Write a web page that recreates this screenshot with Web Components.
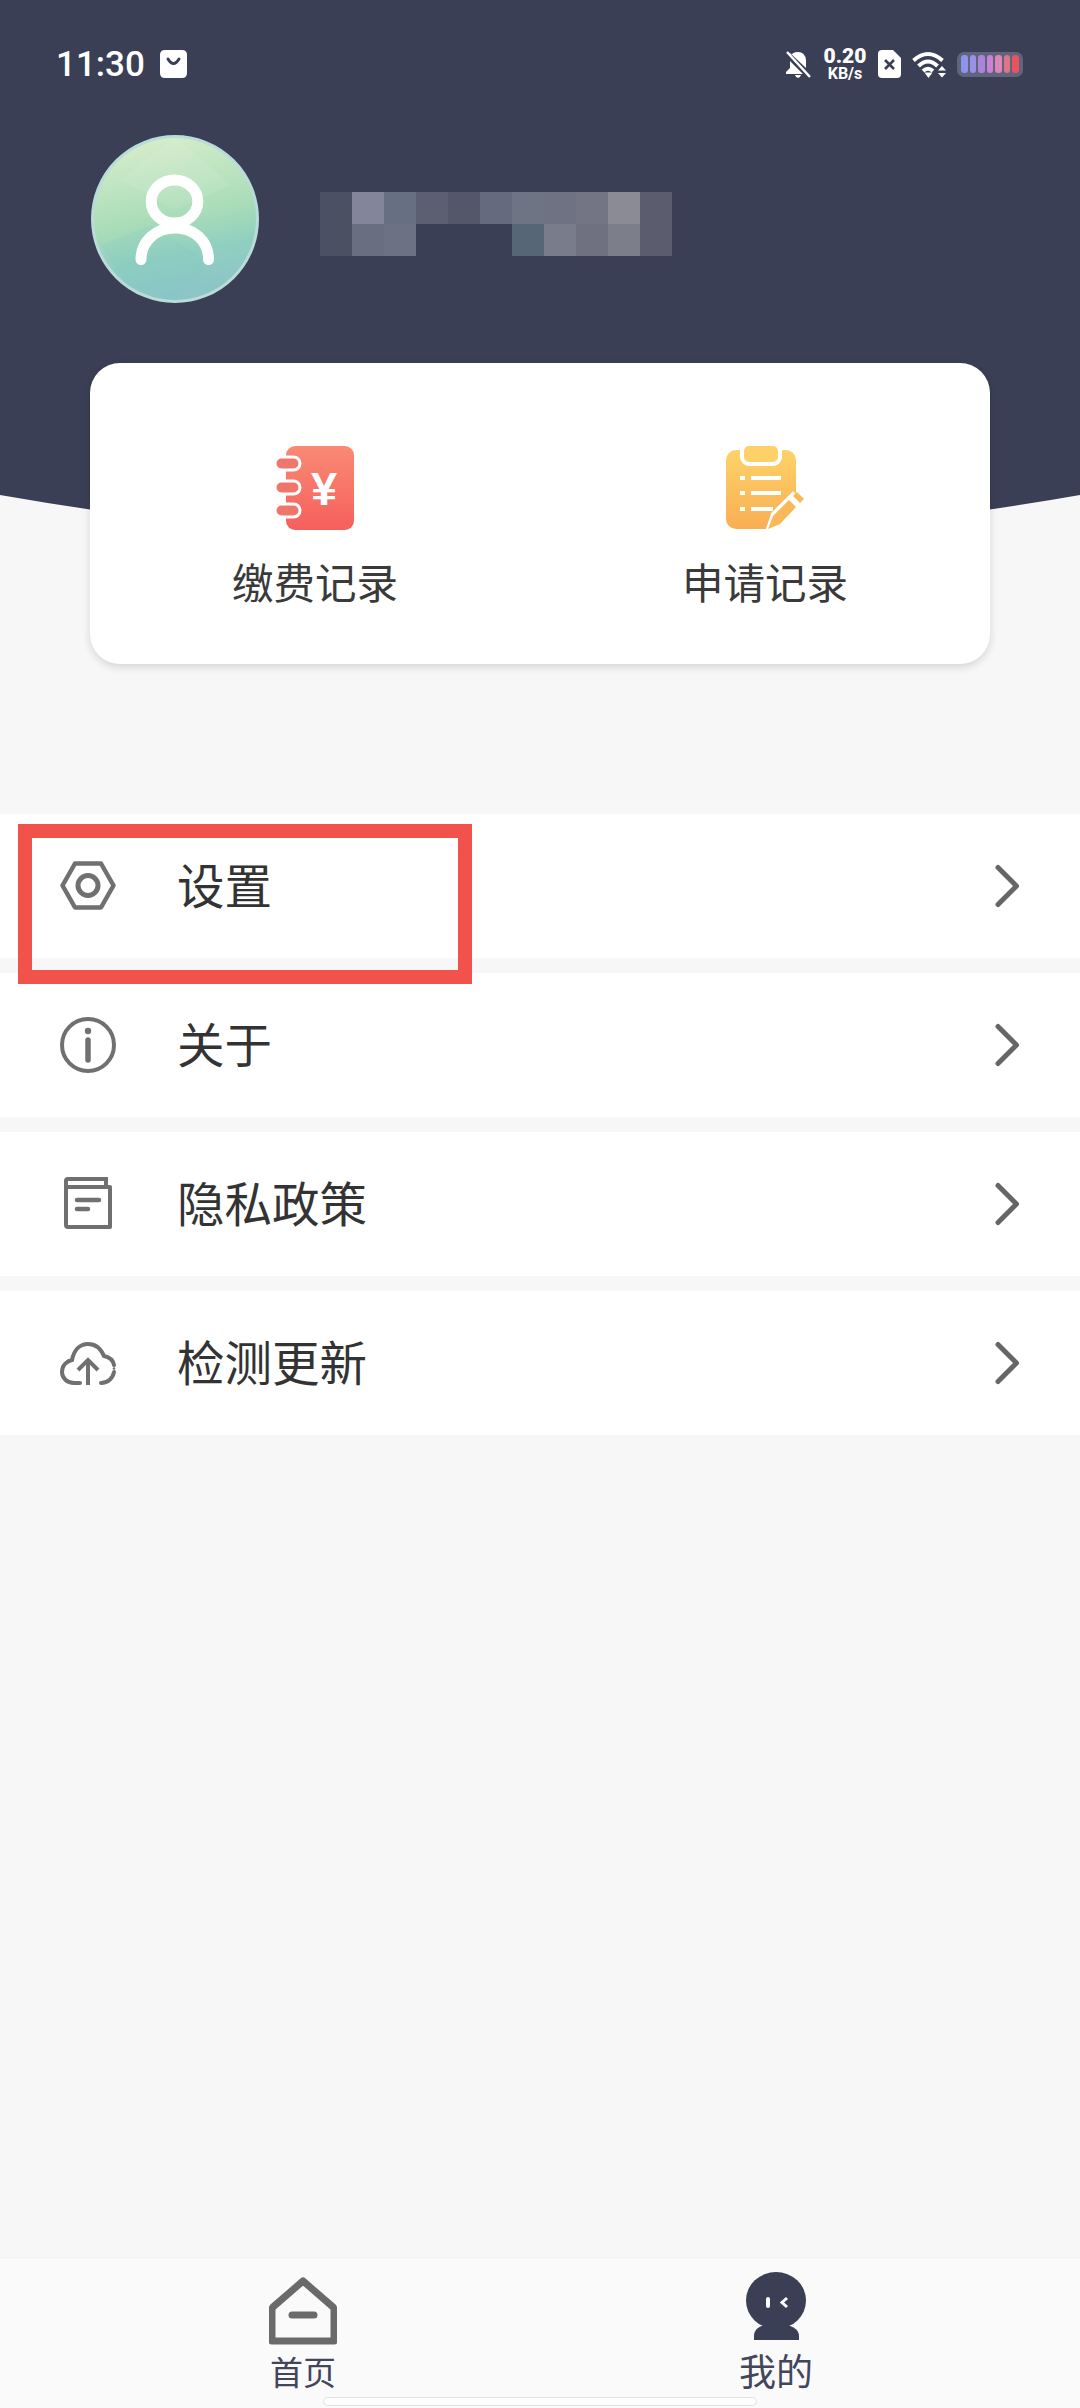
<!DOCTYPE html>
<html lang="zh">
<head>
<meta charset="utf-8">
<title>我的</title>
<style>
    html, body {
        margin: 0;
        padding: 0;
        height: 2408px;
        overflow: hidden;
    }
    body {
        display: flex;
        flex-direction: column;
        background: #f7f7f8;
        font-family: "Noto Sans CJK SC", "Noto Sans", sans-serif;
    }
    .spacer {
        flex: 1;
    }
</style>
</head>
<body>
    <profile-header>
        <record-card></record-card>
    </profile-header>
    <menu-list>
        <menu-row icon="gear">设置</menu-row>
        <menu-row icon="info">关于</menu-row>
        <menu-row icon="doc">隐私政策</menu-row>
        <menu-row icon="cloud">检测更新</menu-row>
    </menu-list>
    <div class="spacer"></div>
    <bottom-nav></bottom-nav>
    <highlight-box></highlight-box>

<script>
class StatusBar extends HTMLElement {
    connectedCallback() {
        this.attachShadow({ mode: 'open' });
        const bars = ['#8c94ec', '#9a92ea', '#ad84dc', '#c884d2', '#dd84b8', '#de7488', '#e9525f'];
        this.shadowRoot.innerHTML = `
            <style>
                :host {
                    display: flex;
                    align-items: center;
                    height: 128px;
                    padding: 0 57px 0 56px;
                    color: #fff;
                    font-family: Roboto, "Noto Sans", sans-serif;
                }
                .time {
                    font-size: 35px;
                    font-weight: 500;
                }
                .left {
                    display: flex;
                    align-items: center;
                    gap: 15px;
                    flex: 1;
                }
                .right {
                    display: flex;
                    align-items: center;
                }
                svg {
                    display: block;
                }
                .speed {
                    display: flex;
                    flex-direction: column;
                    align-items: center;
                    width: 44px;
                    margin: 0 11px 0 12px;
                    font-weight: 700;
                }
                .speed b {
                    font-size: 21px;
                    line-height: 18px;
                }
                .speed span {
                    font-size: 16px;
                    line-height: 17px;
                }
                .battery {
                    display: flex;
                    gap: 2px;
                    align-items: center;
                    justify-content: center;
                    width: 66px;
                    height: 25px;
                    margin-left: 10px;
                    border-radius: 7px;
                    background: #60647c;
                }
                .battery i {
                    display: block;
                    width: 6.5px;
                    height: 18px;
                    border-radius: 3px;
                }
            </style>
            <div class="left">
                <span class="time">11:30</span>
                <svg width="27" height="28" viewBox="0 0 27 28">
                    <path d="M5 0H22Q27 0 27 5V23Q27 28 22 28H5Q0 28 0 23V5Q0 0 5 0Z" fill="#fff"/>
                    <path d="M8 9Q13.5 18 19 9" fill="none" stroke="#3a3f55" stroke-width="3" stroke-linecap="round"/>
                </svg>
            </div>
            <div class="right">
                <svg width="25" height="27" viewBox="0 0 25 27">
                    <path d="M4 6Q6 1 12 1Q19 1 20 9V17L4 2ZM4 10L17 23H0V21L4 17ZM9 24H15Q14 27 12 27Q10 27 9 24Z" fill="#fff"/>
                    <path d="M1 1L24 26" stroke="#fff" stroke-width="2.5"/>
                </svg>
                <div class="speed"><b>0.20</b><span>KB/s</span></div>
                <svg width="23" height="28" viewBox="0 0 23 28">
                    <path d="M4 0H15L23 8V24Q23 28 19 28H4Q0 28 0 24V4Q0 0 4 0Z" fill="#fff"/>
                    <path d="M7 10L16 19M16 10L7 19" stroke="#3a3f55" stroke-width="2.6"/>
                </svg>
                <svg style="margin-left:11px" width="35" height="27" viewBox="0 0 35 27" fill="none" stroke="#fff" stroke-width="4">
                    <path d="M1.500 9.500Q16 -3.500 30.500 9.500"/>
                    <path d="M6.500 15Q16 6 25.500 15"/>
                    <path d="M11 20Q16 15.500 21 20"/>
                    <path d="M12.500 21.500L16.500 27L20.500 21.500Z" fill="#fff" stroke="none"/>
                    <path d="M26 19.500L30 15L34 19.500ZM26 22L34 22L30 26.500Z" fill="#fff" stroke="none"/>
                </svg>
                <div class="battery">${bars.map(c => `<i style="background:${c}"></i>`).join('')}</div>
            </div>
        `;
    }
}

class UserAvatar extends HTMLElement {
    connectedCallback() {
        this.attachShadow({ mode: 'open' });
        this.shadowRoot.innerHTML = `
            <style>
                :host {
                    display: block;
                    width: 168px;
                    height: 168px;
                }
                svg {
                    display: block;
                }
            </style>
            <svg width="168" height="168" viewBox="0 0 168 168">
                <defs>
                    <linearGradient id="face" x1="0.35" y1="0" x2="0.55" y2="1">
                        <stop offset="0" stop-color="#d6edca"/>
                        <stop offset="0.5" stop-color="#a9dcb8"/>
                        <stop offset="0.72" stop-color="#90cfc0"/>
                        <stop offset="1" stop-color="#8cc3c8"/>
                    </linearGradient>
                </defs>
                <circle cx="84" cy="84" r="82.500" fill="url(#face)" stroke="#b9dcd8" stroke-width="3"/>
                <path d="M84 2 L140 50 L84 75 L30 45Z" fill="#fff" opacity=".08"/>
                <path d="M10 110 L60 90 L120 128 L84 166 L35 150Z" fill="#7fc4c4" opacity=".16"/>
                <g fill="none" stroke="#fff" stroke-width="11" stroke-linecap="round">
                    <ellipse cx="83.500" cy="66.500" rx="23.300" ry="21.500"/>
                    <path d="M50 124.500C50 106 65 93 84 93C103 93 117.500 106 117.500 124.500"/>
                </g>
            </svg>
        `;
    }
}

class BlurName extends HTMLElement {
    connectedCallback() {
        this.attachShadow({ mode: 'open' });
        const cells = [
            '#4b5063', '#83859a', '#667082', '#5c5f71', '#54576a', '#656a7e', '#6e7483', '#6f7283', '#737585', '#8b8b96', '#5b5d6e',
            '#4b5063', '#696f80', '#6c7184', 'transparent', 'transparent', 'transparent', '#566676', '#797c8a', '#6f7080', '#7c7e8a', '#5b5d6e'
        ];
        this.shadowRoot.innerHTML = `
            <style>
                :host {
                    display: grid;
                    grid-template-columns: repeat(11, 32px);
                    grid-auto-rows: 32px;
                    margin-top: 10px;
                }
            </style>
            ${cells.map(c => `<div style="background:${c}"></div>`).join('')}
        `;
    }
}

class ProfileHeader extends HTMLElement {
    connectedCallback() {
        this.attachShadow({ mode: 'open' });
        this.shadowRoot.innerHTML = `
            <style>
                :host {
                    display: block;
                    position: relative;
                }
                .bg {
                    position: absolute;
                    left: 0;
                    top: 0;
                    display: block;
                }
                .content {
                    position: relative;
                }
                .user {
                    display: flex;
                    align-items: center;
                    gap: 61px;
                    margin-top: 7px;
                    padding-left: 91px;
                }
                .card {
                    margin-top: 60px;
                    padding: 0 90px;
                }
            </style>
            <svg class="bg" width="1080" height="560" viewBox="0 0 1080 560">
                <path d="M0 0H1080V495Q540 590 0 495Z" fill="#3a3f55"/>
            </svg>
            <div class="content">
                <status-bar></status-bar>
                <div class="user">
                    <user-avatar></user-avatar>
                    <blur-name></blur-name>
                </div>
                <div class="card"><slot></slot></div>
            </div>
        `;
    }
}

class RecordCard extends HTMLElement {
    connectedCallback() {
        this.attachShadow({ mode: 'open' });
        this.shadowRoot.innerHTML = `
            <style>
                :host {
                    display: grid;
                    grid-template-columns: 1fr 1fr;
                    height: 301px;
                    background: #fff;
                    border-radius: 30px;
                    box-shadow: 0 3px 8px rgba(0, 0, 0, 0.14);
                }
                .item {
                    display: flex;
                    flex-direction: column;
                    align-items: center;
                    padding-top: 81px;
                }
                svg {
                    display: block;
                }
                .label {
                    margin-top: 18px;
                    font-size: 41.500px;
                    line-height: 58px;
                    color: #3a3a3a;
                }
            </style>
            <div class="item">
                <svg width="80" height="90" viewBox="0 0 80 90" style="margin-left:2px">
                    <defs>
                        <linearGradient id="red" x1="0" y1="0" x2="0" y2="1">
                            <stop offset="0" stop-color="#f98a75"/>
                            <stop offset="1" stop-color="#f65f5c"/>
                        </linearGradient>
                    </defs>
                    <rect x="10" y="2" width="68" height="84" rx="9" fill="url(#red)"/>
                    <g fill="#f0766b" stroke="#fff" stroke-width="3">
                        <rect x="-1" y="13" width="25" height="13" rx="6.500"/>
                        <rect x="-1" y="37" width="25" height="13" rx="6.500"/>
                        <rect x="-1" y="60" width="25" height="13" rx="6.500"/>
                    </g>
                    <text x="48" y="61" text-anchor="middle" font-family="Liberation Sans" font-weight="700" font-size="47" fill="#fff">¥</text>
                </svg>
                <div class="label">缴费记录</div>
            </div>
            <div class="item">
                <svg width="84" height="90" viewBox="0 0 84 90">
                    <defs>
                        <linearGradient id="amber" x1="0" y1="0" x2="0" y2="1">
                            <stop offset="0" stop-color="#fdd369"/>
                            <stop offset="1" stop-color="#f9ae53"/>
                        </linearGradient>
                    </defs>
                    <rect x="3" y="6" width="70" height="79" rx="10" fill="url(#amber)"/>
                    <path d="M48 90H84V42L74 48L48 78Z" fill="#fff"/>
                    <rect x="19" y="0" width="38" height="20" rx="7" fill="#fdd068" stroke="#fff" stroke-width="4"/>
                    <g stroke="#fff" stroke-width="4">
                        <path d="M28 34H58M28 49H58M28 65H50"/>
                        <path d="M17 34H22M17 49H22M17 65H22"/>
                    </g>
                    <path d="M45 85L50 70L70 50L78 58L58 80Z" fill="#fff" stroke="#fff" stroke-width="4"/>
                    <path d="M45 85L50 72L66 56L73 63L57 80Z" fill="#fab858"/>
                    <path d="M70 52L74 48L81 55L77 59Z" fill="#fab858"/>
                </svg>
                <div class="label">申请记录</div>
            </div>
        `;
    }
}

class MenuList extends HTMLElement {
    connectedCallback() {
        this.attachShadow({ mode: 'open' });
        this.shadowRoot.innerHTML = `
            <style>
                :host {
                    display: flex;
                    flex-direction: column;
                    gap: 15px;
                    margin-top: 150px;
                }
            </style>
            <slot></slot>
        `;
    }
}

const MENU_ICONS = {
    gear: `
        <path d="M2.500 27.500L15 5.500H41L53.500 27.500L41 49.500H15Z" stroke-width="4.500" stroke-linejoin="round"/>
        <circle cx="28" cy="27.500" r="10" stroke-width="5"/>`,
    info: `
        <circle cx="28" cy="28" r="26" stroke-width="4"/>
        <circle cx="28" cy="14" r="3.200" fill="#707070" stroke="none"/>
        <path d="M28 23V43" stroke-width="5.500" stroke-linecap="round"/>`,
    doc: `
        <path d="M6 13V5Q6 3 8 3H46V11" stroke-width="4"/>
        <path d="M6 11H50V51H8Q6 51 6 49V9" stroke-width="4" stroke-linejoin="round"/>
        <path d="M17 24H39M17 33H28" stroke-width="4.500" stroke-linecap="round"/>`,
    cloud: `
        <path d="M20 48H14C7 48 2 43 2 37C2 30 7 26 12 25C14 15 20 9 28 9C36 9 41 14 44 21C49 22 53 25 54 30" stroke-width="4" stroke-linecap="round"/>
        <path d="M54 37C53 43 48 48 41 48" stroke-width="4" stroke-linecap="round"/>
        <circle cx="54" cy="33.500" r="1.300" fill="#707070" stroke="none"/>
        <path d="M28 50V26M18 35L28 25L38 35" stroke-width="4"/>`
};

class MenuRow extends HTMLElement {
    connectedCallback() {
        this.attachShadow({ mode: 'open' });
        const icon = MENU_ICONS[this.getAttribute('icon')] || '';
        this.shadowRoot.innerHTML = `
            <style>
                :host {
                    display: flex;
                    align-items: center;
                    height: 144px;
                    padding: 0 54px 0 60px;
                    background: #fff;
                    color: #333;
                    font-size: 47.500px;
                }
                svg {
                    display: block;
                    flex: none;
                }
                .icon {
                    fill: none;
                    stroke: #707070;
                }
                .label {
                    flex: 1;
                    margin-left: 61px;
                    padding-bottom: 4px;
                    line-height: 60px;
                }
            </style>
            <svg class="icon" width="56" height="56" viewBox="0 0 56 56">${icon}</svg>
            <div class="label"><slot></slot></div>
            <svg width="32" height="52" viewBox="0 0 32 52">
                <path d="M4 7.500L22.500 26L4 44.500" fill="none" stroke="#666" stroke-width="5" stroke-linecap="round" stroke-linejoin="round"/>
            </svg>
        `;
    }
}

class BottomNav extends HTMLElement {
    connectedCallback() {
        this.attachShadow({ mode: 'open' });
        this.shadowRoot.innerHTML = `
            <style>
                :host {
                    display: flex;
                    justify-content: space-between;
                    position: relative;
                    height: 151px;
                    box-sizing: border-box;
                    padding: 0 267px 0 269px;
                    background: #fafafb;
                    border-top: 1px solid #f1f1f2;
                    color: #43465a;
                }
                .item {
                    display: flex;
                    flex-direction: column;
                    align-items: center;
                }
                svg {
                    display: block;
                }
                .home {
                    padding-top: 19px;
                    font-size: 33px;
                    line-height: 36px;
                }
                .home span {
                    margin-top: 8px;
                }
                .mine {
                    padding-top: 14px;
                    font-size: 37px;
                    line-height: 40px;
                }
                .mine span {
                    margin-top: 10px;
                }
                .indicator {
                    position: absolute;
                    left: 323px;
                    top: 139px;
                    width: 434px;
                    height: 9px;
                    box-sizing: border-box;
                    border: 1px solid #e2e2e2;
                    border-radius: 5px;
                    background: #fdfdfd;
                }
            </style>
            <div class="item home">
                <svg width="68" height="68" viewBox="0 0 68 68">
                    <path d="M34 4L64 30Q65 31 65 33V64H3V33Q3 31 4 30Z" fill="none" stroke="#6a6a6a" stroke-width="7" stroke-linejoin="round"/>
                    <path d="M23 38H45" stroke="#6a6a6a" stroke-width="7" stroke-linecap="round"/>
                </svg>
                <span>首页</span>
            </div>
            <div class="item mine">
                <svg width="60" height="68" viewBox="0 0 60 68">
                    <path d="M8 68V64C8 57 14 52 30 52C46 52 53 57 53 64V68Z" fill="#3a3f55"/>
                    <ellipse cx="30" cy="28.500" rx="30" ry="28.500" fill="#3a3f55"/>
                    <rect x="20" y="25" width="4" height="11" rx="2" fill="#fff"/>
                    <path d="M41 26L36 30.500L41 35" fill="none" stroke="#fff" stroke-width="3"/>
                </svg>
                <span>我的</span>
            </div>
            <div class="indicator"></div>
        `;
    }
}

class HighlightBox extends HTMLElement {
    connectedCallback() {
        this.attachShadow({ mode: 'open' });
        this.shadowRoot.innerHTML = `
            <style>
                :host {
                    position: absolute;
                    left: 18px;
                    top: 824px;
                    width: 454px;
                    height: 160px;
                    box-sizing: border-box;
                    border: 14px solid #f1524c;
                }
            </style>
        `;
    }
}

customElements.define('status-bar', StatusBar);
customElements.define('user-avatar', UserAvatar);
customElements.define('blur-name', BlurName);
customElements.define('profile-header', ProfileHeader);
customElements.define('record-card', RecordCard);
customElements.define('menu-list', MenuList);
customElements.define('menu-row', MenuRow);
customElements.define('bottom-nav', BottomNav);
customElements.define('highlight-box', HighlightBox);
</script>
</body>
</html>
